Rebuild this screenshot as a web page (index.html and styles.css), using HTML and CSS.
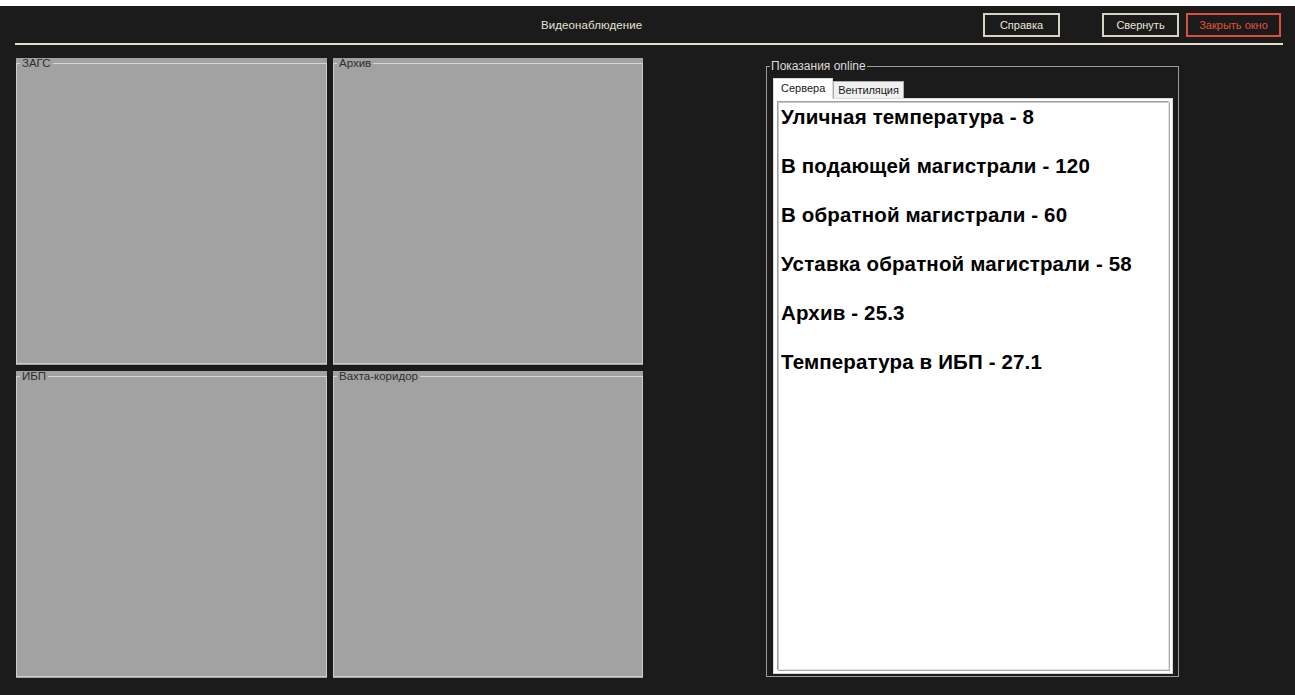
FILE: index.html
```html
<!DOCTYPE html>
<html lang="ru">
<head>
<meta charset="utf-8">
<title>Видеонаблюдение</title>
<link rel="stylesheet" href="styles.css">
</head>
<body>
<div class="app">
  <div class="top-strip"></div>
  <header class="header">
    <div class="title">Видеонаблюдение</div>
    <div class="actions">
      <button class="btn">Справка</button>
      <button class="btn btn-min">Свернуть</button>
      <button class="btn btn-close">Закрыть окно</button>
    </div>
  </header>
  <div class="rule"></div>
  <main class="main">
    <section class="cams">
      <div class="cam"><fieldset class="cam-box"><legend>ЗАГС</legend></fieldset></div>
      <div class="cam"><fieldset class="cam-box"><legend>Архив</legend></fieldset></div>
      <div class="cam"><fieldset class="cam-box"><legend>ИБП</legend></fieldset></div>
      <div class="cam"><fieldset class="cam-box"><legend>Вахта-коридор</legend></fieldset></div>
    </section>
    <fieldset class="readings">
      <legend>Показания online</legend>
      <div class="tabs">
        <div class="tab tab-active">Сервера</div>
        <div class="tab">Вентиляция</div>
      </div>
      <div class="tab-page">
        <div class="values">
          <div class="value">Уличная температура - 8</div>
          <div class="value">В подающей магистрали - 120</div>
          <div class="value">В обратной магистрали - 60</div>
          <div class="value">Уставка обратной магистрали - 58</div>
          <div class="value">Архив - 25.3</div>
          <div class="value">Температура в ИБП - 27.1</div>
        </div>
      </div>
    </fieldset>
  </main>
</div>
</body>
</html>
```

FILE: styles.css
```css
html, body {
  margin: 0;
  padding: 0;
}

body {
  background: #1b1b1b;
  font-family: "Liberation Sans", Arial, sans-serif;
  font-size: 11px;
  color: #e6e0d2;
}

.app {
  display: flex;
  flex-direction: column;
  height: 695px;
}

.top-strip {
  height: 6px;
  background: #ffffff;
}

/* title bar */
.header {
  display: flex;
  align-items: center;
  height: 37px;
  padding: 0 14px 0 541px;
}

.title {
  flex: 1;
  font-size: 11.5px;
  color: #e8e2d4;
  letter-spacing: 0.1px;
}

.actions {
  display: flex;
  align-items: center;
}

.btn {
  box-sizing: border-box;
  height: 24px;
  width: 77px;
  padding: 0;
  background: #1b1b1b;
  border: 2px solid #d8d2c2;
  color: #ece6d8;
  font-family: "Liberation Sans", Arial, sans-serif;
  font-size: 11px;
}

.btn-min {
  margin-left: 42px;
}

.btn-close {
  width: 95px;
  margin-left: 7px;
  border-color: #d9503e;
  color: #e0503c;
}

.rule {
  height: 2px;
  margin: 0 12px 0 15px;
  background: #e6dfcc;
}

/* content */
.main {
  display: flex;
  align-items: flex-start;
  padding: 13px 0 0 16px;
}

.cams {
  display: grid;
  grid-template-columns: 311px 310px;
  grid-template-rows: 307px 307px;
  gap: 6px;
}

.cam {
  display: flex;
  background: #a2a2a2;
  padding: 0 0 1px 0;
}

.cam-box {
  flex: 1;
  margin: 0;
  padding: 0;
  min-width: 0;
  border: 1px solid #cdcdcd;
  border-top-color: #d6d6d6;
}

.cam-box legend {
  margin-left: 3px;
  padding: 0 2px;
  font-size: 11.5px;
  line-height: 10px;
  color: #2e2e2e;
}

/* readings group */
.readings {
  box-sizing: border-box;
  width: 413px;
  height: 617px;
  margin: 2px 0 0 123px;
  padding: 6px 5px 2px 6px;
  border: 1px solid #9c9c9c;
  display: flex;
  flex-direction: column;
}

.readings legend {
  margin-left: -3px;
  padding: 0 1px;
  font-size: 12px;
  line-height: 12px;
  color: #dcdcdc;
}

.tabs {
  display: flex;
  align-items: flex-end;
  height: 20px;
}

.tab {
  box-sizing: border-box;
  height: 17px;
  padding: 0 4px;
  background: #f0f0f0;
  border: 1px solid #adadad;
  border-bottom: none;
  color: #1a1a1a;
  font-size: 11px;
  line-height: 17px;
  letter-spacing: -0.1px;
}

.tab-active {
  height: 21px;
  padding: 0 7px;
  background: #ffffff;
  border-color: #d9d9d9;
  line-height: 18px;
  letter-spacing: 0;
  position: relative;
  top: 1px;
}

.tab-page {
  flex: 1;
  display: flex;
  background: #ffffff;
  border: 1px solid #d9d9d9;
  padding: 2px 3px 3px 3px;
}

.values {
  flex: 1;
  background: #ffffff;
  border: 1px solid;
  border-color: #a0a0a0 #e3e3e3 #e3e3e3 #a0a0a0;
  box-shadow: inset 1px 1px 0 #c9c9c9, 1px 1px 0 #a9a9a9;
  padding: 4px 3px 0 3px;
}

.value {
  font-size: 20.5px;
  font-weight: bold;
  line-height: 22px;
  letter-spacing: 0.15px;
  color: #000000;
  margin-bottom: 27px;
}
```
